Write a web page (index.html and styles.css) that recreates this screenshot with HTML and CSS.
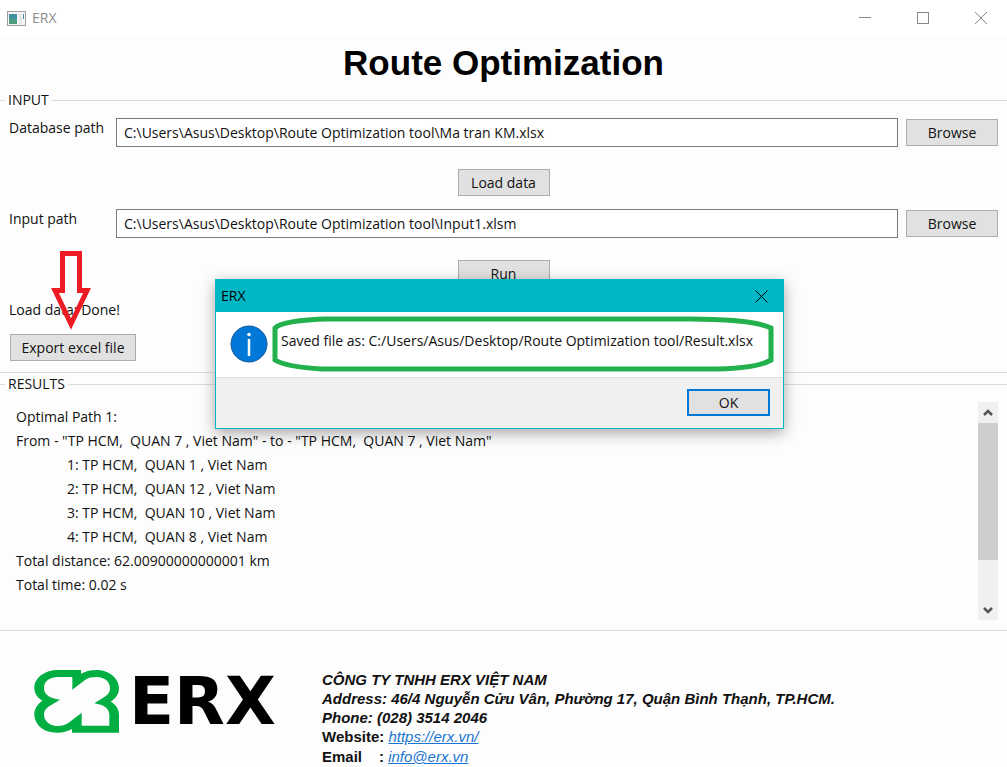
FILE: index.html
```html
<!DOCTYPE html>
<html lang="en">
<head>
    <meta charset="UTF-8">
    <meta name="viewport" content="width=device-width, initial-scale=1.0">
    <title>ERX</title>
    <link rel="stylesheet" href="styles.css">
</head>
<body>
    <header class="title-bar">
        <svg class="app-icon" width="19" height="15" viewBox="0 0 19 15">
            <rect x="0.5" y="0.5" width="18" height="14" fill="#f6f6f6" stroke="#9a9fa3"/>
            <rect x="2" y="3" width="8" height="10" fill="#3f8fa0"/>
            <rect x="2" y="8" width="8" height="5" fill="#4f9c80"/>
            <rect x="12" y="3" width="3" height="10" fill="#e6e6e6"/>
            <rect x="16" y="3" width="1" height="5" fill="#4d8a9c"/>
        </svg>
        <span class="app-name">ERX</span>
        <div class="window-controls">
            <button aria-label="Minimize"><svg width="12" height="12"><path d="M0 5.5h12"/></svg></button>
            <button aria-label="Maximize"><svg width="12" height="12"><rect x="0.5" y="0.5" width="11" height="11"/></svg></button>
            <button aria-label="Close"><svg width="12" height="12"><path d="M0 0l12 12M12 0L0 12"/></svg></button>
        </div>
    </header>

    <main>
        <h1>Route Optimization</h1>

        <fieldset class="input-group">
            <legend>INPUT</legend>
            <div class="path-row">
                <label for="databasePath">Database path</label>
                <input type="text" id="databasePath" value="C:\Users\Asus\Desktop\Route Optimization tool\Ma tran KM.xlsx">
                <button class="btn">Browse</button>
            </div>
            <div class="action-row">
                <button class="btn">Load data</button>
            </div>
            <div class="path-row">
                <label for="inputPath">Input path</label>
                <input type="text" id="inputPath" value="C:\Users\Asus\Desktop\Route Optimization tool\Input1.xlsm">
                <button class="btn">Browse</button>
            </div>
            <div class="action-row">
                <button class="btn">Run</button>
            </div>
            <div class="export">
                <p class="status">Load data: Done!</p>
                <button class="btn btn-export">Export excel file</button>
                <svg class="arrow" width="42" height="82" viewBox="0 0 42 82">
                    <path d="M12.5 3.5h17v37h7.5L21 74 5 40.5h7.5z"/>
                </svg>
            </div>
        </fieldset>

        <fieldset class="results-group">
            <legend>RESULTS</legend>
            <div class="results">
                <div class="results-text">
                    <p>Optimal Path 1:</p>
                    <p>From - "TP HCM,  QUAN 7 , Viet Nam" - to - "TP HCM,  QUAN 7 , Viet Nam"</p>
                    <p class="stop">1: TP HCM,  QUAN 1 , Viet Nam</p>
                    <p class="stop">2: TP HCM,  QUAN 12 , Viet Nam</p>
                    <p class="stop">3: TP HCM,  QUAN 10 , Viet Nam</p>
                    <p class="stop">4: TP HCM,  QUAN 8 , Viet Nam</p>
                    <p>Total distance: 62.00900000000001 km</p>
                    <p>Total time: 0.02 s</p>
                </div>
                <div class="scrollbar">
                    <button aria-label="Scroll up"><svg width="10" height="8"><path d="M1 6l4-4 4 4"/></svg></button>
                    <div class="track"><div class="thumb"></div></div>
                    <button aria-label="Scroll down"><svg width="10" height="8"><path d="M1 2l4 4 4-4"/></svg></button>
                </div>
            </div>
        </fieldset>
    </main>

    <footer>
        <svg class="logo" width="256" height="66" viewBox="0 0 256 66" role="img" aria-label="ERX">
            <g transform="translate(-34 -29) scale(0.3333)">
                <path fill="#00ae42" fill-rule="evenodd" d="M175 87H243V98C260 90 272 87 290 87C328 87 357 112 357 142C357 160 347 173 332 182C347 190 357 203 357 222V275H216V264C203 271 190 275 170 275C130 275 103 250 103 219C103 203 113 189 127 179C112 170 103 157 103 140C103 110 135 87 175 87Z
                M175 108H217V146L255 117C265 110 275 108 290 108C315 108 330 123 330 142C330 155 322 163 312 169L283 187C312 191 328 203 328 222V254H245V215L205 246C195 252 187 255 172 255C148 255 132 240 132 220C132 208 140 200 150 194L180 176C146 171 132 160 132 141C132 120 150 108 175 108Z"/>
            </g>
            <text class="wordmark" x="95" y="54">ERX</text>
        </svg>
        <address>
            <p>CÔNG TY TNHH ERX VIỆT NAM</p>
            <p>Address: 46/4 Nguyễn Cửu Vân, Phường 17, Quận Bình Thạnh, TP.HCM.</p>
            <p>Phone: (028) 3514 2046</p>
            <p class="contact"><span>Website:</span> <a href="https://erx.vn/">https://erx.vn/</a></p>
            <p class="contact"><span class="email">Email <b>:</b></span> <a href="mailto:info@erx.vn">info@erx.vn</a></p>
        </address>
    </footer>

    <div class="dialog" role="dialog" aria-labelledby="dialogTitle">
        <div class="dialog-title">
            <span id="dialogTitle">ERX</span>
            <button aria-label="Close"><svg width="13" height="13"><path d="M0.5 0.5l12 12M12.5 0.5l-12 12"/></svg></button>
        </div>
        <div class="dialog-body">
            <svg class="info-icon" width="38" height="38" viewBox="0 0 38 38">
                <circle cx="19" cy="19" r="18" fill="#0078d7" stroke="#15589a"/>
                <path d="M19 14v17" stroke="#fff" stroke-width="2.5"/>
                <circle cx="19" cy="9.5" r="1.8" fill="#fff"/>
            </svg>
            <p>Saved file as: C:/Users/Asus/Desktop/Route Optimization tool/Result.xlsx</p>
            <svg class="marker" width="502" height="56" viewBox="0 0 502 56">
                <path d="M56 3H418Q480 3 499 12V44Q484 53 436 53H50Q14 51 3 44V12Q12 4 56 3Z"/>
            </svg>
        </div>
        <div class="dialog-footer">
            <button class="btn-ok">OK</button>
        </div>
    </div>
</body>
</html>
```
FILE: styles.css
```css
* {
    margin: 0;
    padding: 0;
    box-sizing: border-box;
}

body {
    position: relative;
    min-height: 100vh;
    background: #fdfdfd;
    color: #111;
    font-family: 'Segoe UI', 'Open Sans', sans-serif;
    font-size: 14px;
    line-height: 20px;
}

button,
input {
    font: inherit;
    color: inherit;
}

button svg {
    display: block;
    fill: none;
    stroke: #888;
}

/* Window title bar */
.title-bar {
    display: flex;
    align-items: center;
    height: 36px;
    padding: 0 3px 0 7px;
    background: #fff;
}

.app-name {
    margin-left: 6px;
    color: #8c8c8c;
}

.window-controls {
    display: flex;
    gap: 12px;
    margin-left: auto;
}

.window-controls button {
    display: flex;
    justify-content: center;
    align-items: center;
    width: 46px;
    height: 36px;
    border: none;
    background: none;
}

h1 {
    height: 54px;
    font-family: Arial, 'Liberation Sans', sans-serif;
    font-size: 35px;
    line-height: 54px;
    text-align: center;
    color: #000;
}

fieldset {
    min-width: 0;
    border: solid #dcdcdc;
    border-width: 1px 0;
}

legend {
    padding: 0 3px;
}

.btn {
    width: 92px;
    height: 27px;
    background: #e1e1e1;
    border: 1px solid #adadad;
    line-height: 24px;
}

.input-group {
    padding: 8px 9px 11px;
}

.input-group legend {
    margin-left: -4px;
}

.path-row {
    display: flex;
    align-items: center;
}

.path-row label {
    align-self: flex-start;
    width: 107px;
}

.path-row input {
    flex: 1;
    min-width: 0;
    height: 29px;
    margin-right: 8px;
    padding: 0 7px;
    background: #fff;
    border: 1px solid #7a7a7a;
}

.action-row {
    display: flex;
    justify-content: center;
    padding: 22px 0 13px;
}

.export {
    position: relative;
}

.btn-export {
    width: 126px;
    margin: 14px 0 0 1px;
    display: block;
}

.arrow {
    position: absolute;
    left: 41px;
    bottom: 29px;
    fill: none;
    stroke: #ed1c24;
    stroke-width: 5;
}

/* Results list */
.results-group {
    margin-top: 1px;
    padding: 8px 9px 10px 16px;
}

.results-group legend {
    margin-left: -11px;
}

.results {
    display: flex;
    justify-content: space-between;
}

.results-text {
    padding: 3px 0 23px;
    line-height: 24px;
}

.results-text p {
    white-space: pre;
}

.results-text .stop {
    padding-left: 51px;
}

.scrollbar {
    display: flex;
    flex-direction: column;
    width: 20px;
    background: #f0f0f0;
}

.scrollbar button {
    display: flex;
    justify-content: center;
    align-items: center;
    height: 21px;
    border: none;
    background: none;
}

.scrollbar svg {
    stroke: #555;
    stroke-width: 2.5;
}

.track {
    flex: 1;
}

.thumb {
    height: 78%;
    background: #cdcdcd;
}

/* Company details */
footer {
    display: flex;
    align-items: flex-start;
    padding: 39px 0 0 34px;
}

.logo {
    overflow: visible;
}

.wordmark {
    font-family: 'DejaVu Sans', sans-serif;
    font-size: 66px;
    font-weight: bold;
}

address {
    margin-left: 32px;
    font-family: Arial, 'Liberation Sans', sans-serif;
    font-size: 15px;
    font-weight: bold;
    line-height: 19px;
}

.contact {
    font-style: normal;
    line-height: 20px;
}

.contact a {
    color: #1a75d1;
    font-style: italic;
    font-weight: normal;
}

.email {
    display: inline-flex;
    justify-content: space-between;
    width: 62px;
}

/* Message box */
.dialog {
    position: absolute;
    top: 279px;
    left: 215px;
    width: 569px;
    background: #fff;
    border: 1px solid #00b7c6;
    box-shadow: 0 4px 14px rgba(0, 0, 0, 0.35);
}

.dialog-title {
    display: flex;
    justify-content: space-between;
    align-items: center;
    height: 32px;
    padding: 0 15px 0 5px;
    background: #00b7c6;
    color: #000;
}

.dialog-title button {
    border: none;
    background: none;
}

.dialog-title svg {
    stroke: #000;
}

.dialog-body {
    position: relative;
    display: flex;
    height: 65px;
    padding: 13px 14px;
}

.dialog-body p {
    margin: 6px 0 0 13px;
    white-space: nowrap;
}

.marker {
    position: absolute;
    top: 4px;
    left: 56px;
    fill: none;
    stroke: #22b14c;
    stroke-width: 5;
}

.dialog-footer {
    display: flex;
    justify-content: flex-end;
    padding: 11px 13px 12px;
    background: #f0f0f0;
    border-top: 1px solid #dfdfdf;
}

.btn-ok {
    width: 83px;
    height: 27px;
    background: #e1e1e1;
    border: 2px solid #0078d7;
    line-height: 22px;
}
```
